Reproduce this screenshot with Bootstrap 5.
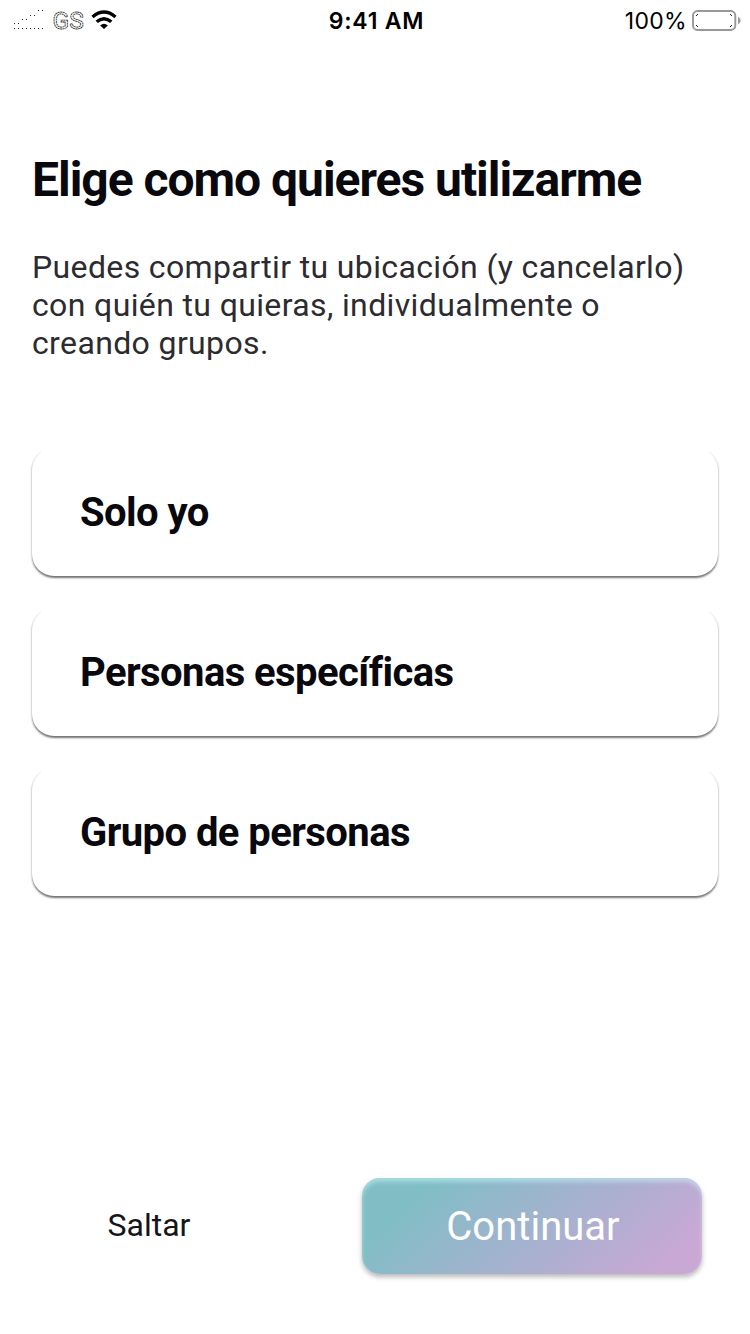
<!DOCTYPE html>
<html lang="es">
<head>
<meta charset="utf-8">
<meta name="viewport" content="width=device-width, initial-scale=1">
<title>Elige como quieres utilizarme</title>
<link href="https://cdn.jsdelivr.net/npm/bootstrap@5.3.0/dist/css/bootstrap.min.css" rel="stylesheet">
<style>
body { font-family: Roboto, "Liberation Sans", sans-serif; color: #08080d; background: #fff; }
.screen { height: 1334px; width: 750px; }
.status { height: 40px; font-family: Inter, sans-serif; color: #000; line-height: 42px; }
.clock { font-size: 23px; font-weight: 600; letter-spacing: .8px; margin-right: 1px; }
.percent { font-size: 23px; letter-spacing: .3px; margin-right: -1px; }
.heading { font-size: 48px; line-height: 56px; font-weight: 700; letter-spacing: -1.03px; margin-top: 112px; }
.intro { font-size: 32px; line-height: 38px; letter-spacing: .37px; color: #2b2b30; margin-top: 40px; }
.options { margin-top: 86px; gap: 32px; }
.option { height: 128px; width: 686px; border: 0; border-radius: 22px; background: #fff; padding: 1px 0 0 48px; font-size: 40px; font-weight: 700; letter-spacing: -.57px; color: #08080d; box-shadow: 0 1.5px 2px rgba(0,0,0,.55); clip-path: inset(4px -6px -8px); }
.skip { font-size: 32px; color: #15151a; width: 234px; padding: 0 0 2px; line-height: 38px; }
.go { width: 340px; height: 96px; border: 0; border-radius: 18px; color: #fff; font-size: 40px; letter-spacing: .02px; padding: 2px 0 0 2px; background: linear-gradient(138deg, #80bec5 16%, #a9b0d0 58%, #c9a8d5 90%); box-shadow: 0 3px 5px rgba(0,0,0,.28), inset 0 4px 4px rgba(205,250,255,.48); }
.go:hover { color: #fff; }
.actions { padding: 0 48px 60px 32px; }
</style>
</head>
<body>
<main class="screen d-flex flex-column overflow-hidden">
  <header class="status">
    <div class="row g-0">
      <div class="col-4">
        <svg class="d-block" width="130" height="40" viewBox="0 0 130 40" aria-hidden="true">
          <g stroke="#222" fill="none">
            <path d="M14 28.5h29" stroke-dasharray="1 3"/>
            <path d="M14 23.5h1M18 23.5h1M22 19.5h1M26 19.5h1M30 15.5h1M34 15.5h1M38 10.5h1M42 10.5h1"/>
          </g>
          <text x="52.5" y="29" font-family="Roboto" font-size="24.5" fill="#fff" stroke="#111" stroke-width=".8" stroke-dasharray="2 .5">GS</text>
          <g fill="none" stroke="#000" stroke-width="3.4">
            <path d="M92.5 17Q104 7.2 115.5 17"/>
            <path d="M96.7 21.8Q104 15.5 111.3 21.8"/>
          </g>
          <path d="M100.2 25.5Q104 22 107.8 25.5L104 29Z"/>
        </svg>
      </div>
      <div class="col-4 text-center"><span class="clock ps-1">9:41 AM</span></div>
      <div class="col-4 d-flex justify-content-end">
        <span class="percent">100%</span>
        <svg class="ms-1" width="60" height="40" viewBox="690 0 60 40" aria-hidden="true">
          <rect x="693" y="11" width="42.3" height="19" rx="4.5" fill="#fff" stroke="#999" stroke-width="1.9"/>
          <path d="M738 16.5q5 4 0 8Z" fill="#999"/>
          <path d="M696 15.5h1M697 14.5h1M731 15.5h1M730 14.5h1M696 25.5h1M697 26.5h1M731 25.5h1M730 26.5h1" stroke="#222"/>
        </svg>
      </div>
    </div>
  </header>
  <section class="px-4 mx-2">
    <h1 class="heading mb-0 text-nowrap">Elige como quieres utilizarme</h1>
    <p class="intro mb-0">Puedes compartir tu ubicación (y cancelarlo)<br>con quién tu quieras, individualmente o<br>creando grupos.</p>
    <div class="options d-flex flex-column">
      <button class="option text-start" type="button">Solo yo</button>
      <button class="option text-start" type="button">Personas específicas</button>
      <button class="option text-start" type="button">Grupo de personas</button>
    </div>
  </section>
  <footer class="actions mt-auto d-flex justify-content-between align-items-center">
    <button class="btn border-0 skip" type="button">Saltar</button>
    <button class="btn go" type="button">Continuar</button>
  </footer>
</main>
<script src="https://cdn.jsdelivr.net/npm/bootstrap@5.3.0/dist/js/bootstrap.bundle.min.js"></script>
</body>
</html>
